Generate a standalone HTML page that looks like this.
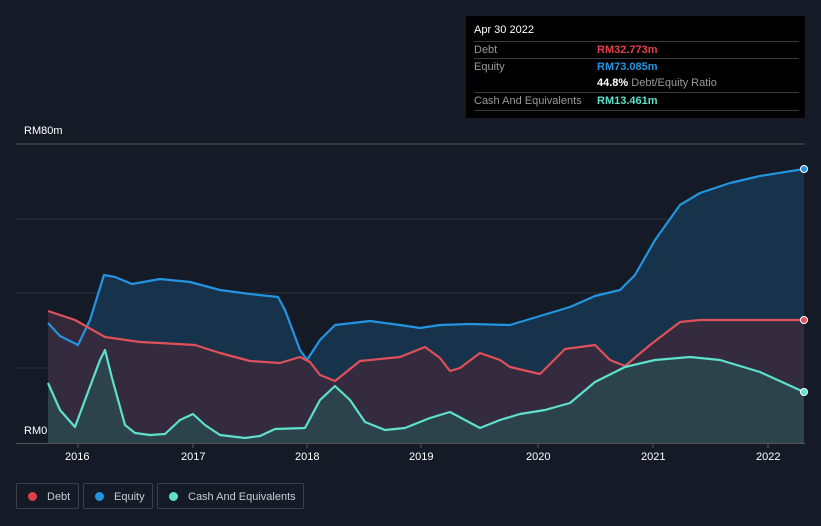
<!DOCTYPE html><html><head><style>
body{margin:0;width:821px;height:526px;background:#151b26;font-family:"Liberation Sans",sans-serif;overflow:hidden;position:relative}
.t{position:absolute;color:#fff;font-size:11px}
.tip{position:absolute;left:466px;top:16px;width:339px;height:102px;background:#000}
.row{position:absolute;left:8px;width:325px;border-top:1px solid #3a3a3a;font-size:11px;color:#9a9a9a}
.lg{position:absolute;top:483px;height:26px;border:1px solid #3a414c;border-radius:2px;color:#c8ccd2;font-size:11px;line-height:26px;box-sizing:border-box}
.lg i{display:inline-block;width:9px;height:9px;border-radius:50%;margin:0 10px 0 11px;vertical-align:-1px}
</style></head><body>
<svg width="821" height="526" style="position:absolute;left:0;top:0">
<g stroke="#2c333e" stroke-width="1"><line x1="16" y1="144" x2="805" y2="144" stroke="#555"/><line x1="16" y1="219" x2="805" y2="219"/><line x1="16" y1="293" x2="805" y2="293"/><line x1="16" y1="368" x2="805" y2="368"/><line x1="16" y1="443.5" x2="805" y2="443.5" stroke="#555"/></g>
<polygon fill="#173550" opacity="0.9" points="48,323 60,336 78,345 90,320 104,275 115,277 132,284 160,279 190,282 220,290 250,294 278,297 285,310 300,350 307,360 320,340 335,325 370,321 400,325 420,328 440,325 470,324 510,325 540,316 570,307 595,296 620,290 635,275 655,240 680,205 700,193 730,183 760,176 804,169 804,443 48,443"/>
<polygon fill="#3a2a3c" opacity="0.85" points="48,311 75,320 105,337 140,342 160,343 195,345 220,353 250,361 280,363 300,357 310,362 320,375 335,381 360,361 400,357 425,347 440,358 450,371 460,368 480,353 500,360 510,367 540,374 565,349 595,345 610,360 625,366 650,345 680,322 700,320 804,320 804,443 48,443"/>
<polygon fill="#2a4a50" opacity="0.8" points="48,383 60,410 75,427 85,400 100,360 105,350 112,378 125,425 135,433 150,435 165,434 180,420 193,414 205,425 220,435 245,438 260,436 275,429 305,428 320,400 335,386 350,400 365,422 385,430 405,428 430,418 450,412 465,420 480,428 500,420 520,414 545,410 570,403 595,382 625,367 655,360 690,357 720,360 760,372 804,392 804,443 48,443"/>
<g fill="none" stroke-width="2.2" stroke-linejoin="round">
<polyline stroke="#2394df" points="48,323 60,336 78,345 90,320 104,275 115,277 132,284 160,279 190,282 220,290 250,294 278,297 285,310 300,350 307,360 320,340 335,325 370,321 400,325 420,328 440,325 470,324 510,325 540,316 570,307 595,296 620,290 635,275 655,240 680,205 700,193 730,183 760,176 804,169"/>
<polyline stroke="#e0505a" points="48,311 75,320 105,337 140,342 160,343 195,345 220,353 250,361 280,363 300,357 310,362 320,375 335,381 360,361 400,357 425,347 440,358 450,371 460,368 480,353 500,360 510,367 540,374 565,349 595,345 610,360 625,366 650,345 680,322 700,320 804,320"/>
<polyline stroke="#5ee0cc" points="48,383 60,410 75,427 85,400 100,360 105,350 112,378 125,425 135,433 150,435 165,434 180,420 193,414 205,425 220,435 245,438 260,436 275,429 305,428 320,400 335,386 350,400 365,422 385,430 405,428 430,418 450,412 465,420 480,428 500,420 520,414 545,410 570,403 595,382 625,367 655,360 690,357 720,360 760,372 804,392"/>
</g>
<circle cx="804" cy="169" r="3.5" fill="#2394df" stroke="#fff" stroke-width="1"/>
<circle cx="804" cy="320" r="3.5" fill="#e0505a" stroke="#fff" stroke-width="1"/>
<circle cx="804" cy="392" r="3.5" fill="#5ee0cc" stroke="#fff" stroke-width="1"/>
<g stroke="#555"><line x1="78" y1="443" x2="78" y2="448"/><line x1="193" y1="443" x2="193" y2="448"/><line x1="307" y1="443" x2="307" y2="448"/><line x1="421" y1="443" x2="421" y2="448"/><line x1="538" y1="443" x2="538" y2="448"/><line x1="653" y1="443" x2="653" y2="448"/><line x1="768" y1="443" x2="768" y2="448"/></g>
</svg>
<div class="t" style="left:24px;top:125px">RM80m</div>
<div class="t" style="left:24px;top:425px">RM0</div>
<div class="t" style="left:65px;top:451px">2016</div>
<div class="t" style="left:181px;top:451px">2017</div>
<div class="t" style="left:295px;top:451px">2018</div>
<div class="t" style="left:409px;top:451px">2019</div>
<div class="t" style="left:526px;top:451px">2020</div>
<div class="t" style="left:641px;top:451px">2021</div>
<div class="t" style="left:756px;top:451px">2022</div>
<div class="tip">
<div style="position:absolute;left:8px;top:8px;color:#fff;font-size:11px">Apr 30 2022</div>
<div class="row" style="top:25px;height:17px;line-height:17px">Debt<span style="position:absolute;left:123px;color:#e0404a;font-weight:bold">RM32.773m</span></div>
<div class="row" style="top:42px;height:17px;line-height:17px">Equity<span style="position:absolute;left:123px;color:#2394df;font-weight:bold">RM73.085m</span></div>
<div style="position:absolute;left:131px;top:59px;line-height:17px;font-size:11px;color:#9a9a9a"><b style="color:#fff">44.8%</b> Debt/Equity Ratio</div>
<div class="row" style="top:76px;height:17px;line-height:17px;border-bottom:1px solid #3a3a3a">Cash And Equivalents<span style="position:absolute;left:123px;color:#5ee0cc;font-weight:bold">RM13.461m</span></div>
</div>
<div class="lg" style="left:16px;width:63px"><i style="background:#e0404a"></i>Debt</div>
<div class="lg" style="left:83px;width:70px"><i style="background:#2394df"></i>Equity</div>
<div class="lg" style="left:157px;width:147px"><i style="background:#5ee0cc"></i>Cash And Equivalents</div>
</body></html>
